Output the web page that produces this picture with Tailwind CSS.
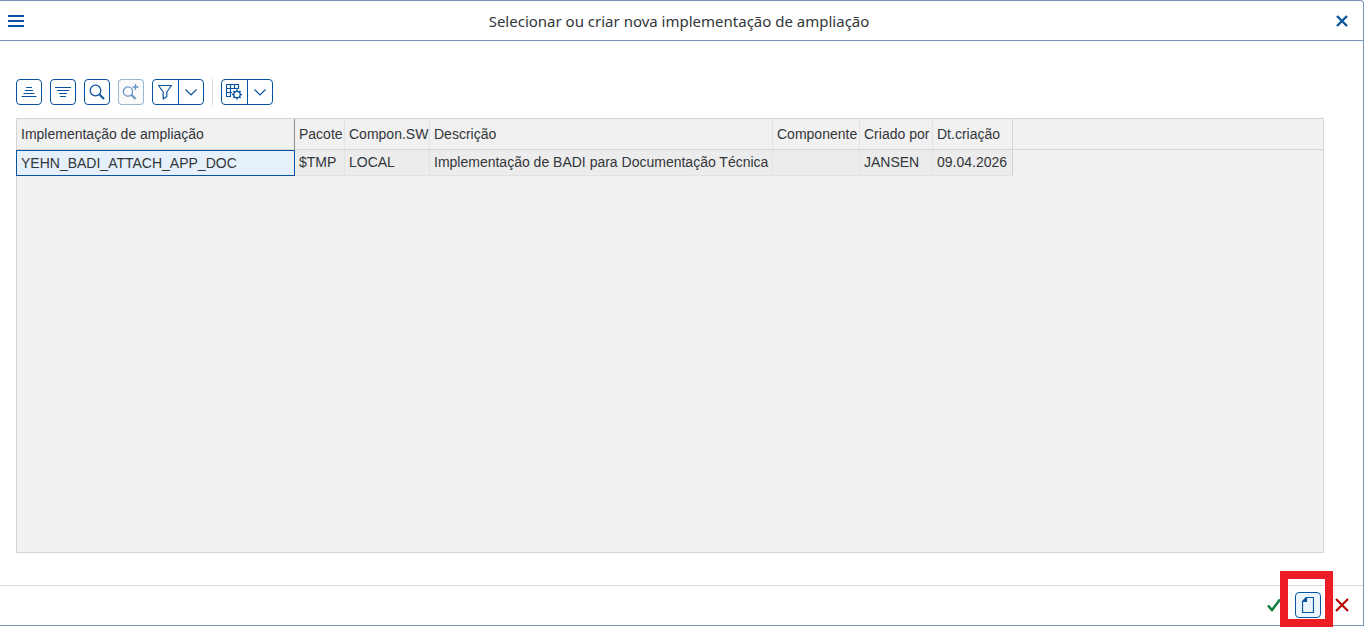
<!DOCTYPE html>
<html lang="pt-BR">

<head>
    <meta charset="UTF-8">
    <meta name="viewport" content="width=device-width, initial-scale=1.0">
    <title>Selecionar ou criar nova implementação de ampliação</title>
    <script src="https://cdn.jsdelivr.net/npm/@tailwindcss/browser@4"></script>
</head>

<body class="bg-white font-['Liberation_Sans',Arial,sans-serif] text-[#32363a]">
    <div class="h-screen pb-px overflow-hidden">
        <div class="flex flex-col h-full border-t border-r border-b border-[#7596b8] rounded-tr-sm">

            <!-- title bar -->
            <header class="flex items-center justify-between h-10 shrink-0 pl-[3px] pr-2 border-b border-[#7596b8]">
                <button type="button" aria-label="Menu" class="flex items-center justify-center size-[26px] text-[#0854a0]">
                    <svg width="16" height="12" viewBox="0 0 16 12" fill="currentColor" shape-rendering="crispEdges">
                        <path d="M0 0h16v2H0zM0 5h16v2H0zM0 10h16v2H0z" />
                    </svg>
                </button>
                <h1 class="text-[15px] leading-5 font-['Noto_Sans',sans-serif]">Selecionar ou criar nova implementação de ampliação</h1>
                <button type="button" aria-label="Fechar" class="flex items-center justify-center size-[26px] text-[#0854a0]">
                    <svg width="12" height="12" viewBox="0 0 12 12" fill="none" stroke="currentColor" stroke-width="2.400">
                        <path d="M1 1l10 10M11 1L1 11" />
                    </svg>
                </button>
            </header>

            <main class="flex flex-col grow pl-4 pr-[39px] pt-[38px] pb-8">
                <!-- toolbar -->
                <div class="flex items-center gap-2 mb-[13px] text-[#0854a0]">
                    <button type="button" aria-label="Ordenar crescente" class="flex items-center justify-center size-[26px] border border-[#0854a0] rounded">
                        <svg width="16" height="16" viewBox="0 0 16 16" fill="none" stroke="currentColor">
                            <path d="M5 3.500h6M4 6.500h8M2.500 9.500h11M.5 12.500h15" />
                        </svg>
                    </button>
                    <button type="button" aria-label="Ordenar decrescente" class="flex items-center justify-center size-[26px] border border-[#0854a0] rounded">
                        <svg width="16" height="16" viewBox="0 0 16 16" fill="none" stroke="currentColor">
                            <path d="M0 3.500h16M2 6.500h12M4 9.500h8M5 12.500h6" />
                        </svg>
                    </button>
                    <button type="button" aria-label="Procurar" class="flex items-center justify-center size-[26px] border border-[#0854a0] rounded">
                        <svg width="16" height="16" viewBox="0 0 16 16" fill="none" stroke="currentColor">
                            <circle cx="6.500" cy="6.500" r="5.300" stroke-width="1.200" />
                            <path d="M10.500 10.500l4.500 4.500" stroke-width="2" />
                        </svg>
                    </button>
                    <button type="button" aria-label="Procurar seguinte" disabled class="flex items-center justify-center size-[26px] border border-[#0854a0]/40 rounded bg-[#fafafa] text-[#0854a0]/60">
                        <svg width="18" height="16" viewBox="0 0 18 16" fill="none" stroke="currentColor">
                            <circle cx="6" cy="7.500" r="4.600" stroke-width="1.300" />
                            <path d="M9.600 11l4 4" stroke-width="2" />
                            <path d="M13.500 0v6M10.500 3h6" stroke-width="1.300" />
                        </svg>
                    </button>
                    <div class="flex h-[26px] w-[52px] border border-[#0854a0] rounded">
                        <button type="button" aria-label="Filtrar" class="flex items-center justify-center w-[26px] pr-px border-r border-[#0854a0]">
                            <svg width="16" height="16" viewBox="0 0 16 16" fill="none" stroke="currentColor" stroke-width="1.200" stroke-linejoin="round">
                                <path d="M1.500 1.500h13L9.800 8v4.500L6.200 15V8z" />
                            </svg>
                        </button>
                        <button type="button" aria-label="Opções de filtro" class="flex items-center justify-center grow">
                            <svg width="12" height="8" viewBox="0 0 12 8" fill="none" stroke="currentColor" stroke-width="1.200">
                                <path d="M.5 1.500L6 7l5.500-5.500" />
                            </svg>
                        </button>
                    </div>
                    <div class="w-px h-[26px] bg-[#d9d9d9]"></div>
                    <div class="flex h-[26px] w-[52px] border border-[#0854a0] rounded">
                        <button type="button" aria-label="Layout" class="flex items-center justify-center w-[26px] pr-px border-r border-[#0854a0]">
                            <svg width="16" height="16" viewBox="0 0 16 16" fill="none" stroke="currentColor">
                                <path d="M5 12.500H.5v-12h12v4.500M.5 4.500h12M.5 8.500h5.500M4.500.5v12M8.500.5v4.500" stroke-width="1.200" />
                                <circle cx="11" cy="10.500" r="3.200" stroke-width="1.300" />
                                <path d="M11 5.500v1.800M11 13.700v1.800M6 10.500h1.800M14.200 10.500H16M7.500 7l1.200 1.200M13.300 12.800l1.200 1.200M14.500 7l-1.200 1.200M8.700 12.800L7.500 14" stroke-width="1.600" />
                            </svg>
                        </button>
                        <button type="button" aria-label="Opções de layout" class="flex items-center justify-center grow">
                            <svg width="12" height="8" viewBox="0 0 12 8" fill="none" stroke="currentColor" stroke-width="1.200">
                                <path d="M.5 1.500L6 7l5.500-5.500" />
                            </svg>
                        </button>
                    </div>
                </div>

                <!-- grid -->
                <div class="grow bg-[#f1f1f1] border border-[#d5d5d5]">
                    <table class="w-full table-fixed border-separate border-spacing-0 text-sm text-left whitespace-nowrap">
                        <colgroup>
                            <col class="w-[278px]">
                            <col class="w-[50px]">
                            <col class="w-[85px]">
                            <col class="w-[343px]">
                            <col class="w-[87px]">
                            <col class="w-[73px]">
                            <col class="w-[80px]">
                            <col>
                        </colgroup>
                        <thead>
                            <tr class="h-[31px]">
                                <th class="pl-1 font-normal border-b border-r border-b-[#d5d5d5] border-r-[#8c8c8c]">Implementação de ampliação</th>
                                <th class="pl-1 font-normal border-b border-r border-b-[#d5d5d5] border-r-[#e2e2e2]">Pacote</th>
                                <th class="pl-1 font-normal border-b border-r border-b-[#d5d5d5] border-r-[#e2e2e2]">Compon.SW</th>
                                <th class="pl-1 font-normal border-b border-r border-b-[#d5d5d5] border-r-[#e2e2e2]">Descrição</th>
                                <th class="pl-1 font-normal border-b border-r border-b-[#d5d5d5] border-r-[#e2e2e2]">Componente</th>
                                <th class="pl-1 font-normal border-b border-r border-b-[#d5d5d5] border-r-[#e2e2e2]">Criado por</th>
                                <th class="pl-1 font-normal border-b border-r border-b-[#d5d5d5] border-r-[#d5d5d5]">Dt.criação</th>
                                <td class="border-b border-b-[#d5d5d5]"></td>
                            </tr>
                        </thead>
                        <tbody>
                            <tr class="h-[26px]">
                                <td class="relative pl-1">
                                    <div class="absolute inset-y-0 -left-px right-0 border border-[#0854a0] bg-[#e5f0fa]"></div>
                                    <span class="relative">YEHN_BADI_ATTACH_APP_DOC</span>
                                </td>
                                <td class="pl-1 pb-px bg-[#ececec] border-b border-r border-[#e2e2e2]">$TMP</td>
                                <td class="pl-1 pb-px bg-[#ececec] border-b border-r border-[#e2e2e2]">LOCAL</td>
                                <td class="pl-1 pb-px bg-[#ececec] border-b border-r border-[#e2e2e2]">Implementação de BADI para Documentação Técnica</td>
                                <td class="pl-1 pb-px bg-[#ececec] border-b border-r border-[#e2e2e2]"></td>
                                <td class="pl-1 pb-px bg-[#ececec] border-b border-r border-[#e2e2e2]">JANSEN</td>
                                <td class="pl-1 pb-px bg-[#ececec] border-b border-r border-b-[#e2e2e2] border-r-[#d5d5d5]">09.04.2026</td>
                                <td></td>
                            </tr>
                        </tbody>
                    </table>
                </div>
            </main>

            <!-- actions -->
            <footer class="flex items-center justify-end gap-2 h-10 shrink-0 pr-2 pb-px border-t border-[#d9d9d9]">
                <button type="button" aria-label="Confirmar" class="flex items-center justify-center size-[26px] text-[#107e3e]">
                    <svg width="14" height="14" viewBox="0 0 14 14" fill="none" stroke="currentColor" stroke-width="2.500">
                        <path d="M1 7.500l4 4.500L13 1.500" />
                    </svg>
                </button>
                <div class="relative">
                    <button type="button" aria-label="Criar" class="flex items-center justify-center size-[26px] border border-[#0854a0] rounded bg-[#ebf5fe] text-[#0854a0]">
                        <svg width="12" height="16" viewBox="0 0 12 16" fill="none" stroke="currentColor" stroke-width="1.200">
                            <path d="M4.500.5h7v15H.5V4.500z" />
                            <path d="M4.500.5v4h-4z" fill="currentColor" />
                        </svg>
                    </button>
                    <div class="absolute -left-[15px] -right-3 -top-[21px] -bottom-[9px] border-8 border-[#ed1c24] pointer-events-none"></div>
                </div>
                <button type="button" aria-label="Cancelar" class="flex items-center justify-center size-[26px] text-[#bb0000]">
                    <svg width="14" height="14" viewBox="0 0 14 14" fill="none" stroke="currentColor" stroke-width="2.200">
                        <path d="M1 1l12 12M13 1L1 13" />
                    </svg>
                </button>
            </footer>
        </div>
    </div>
</body>

</html>
